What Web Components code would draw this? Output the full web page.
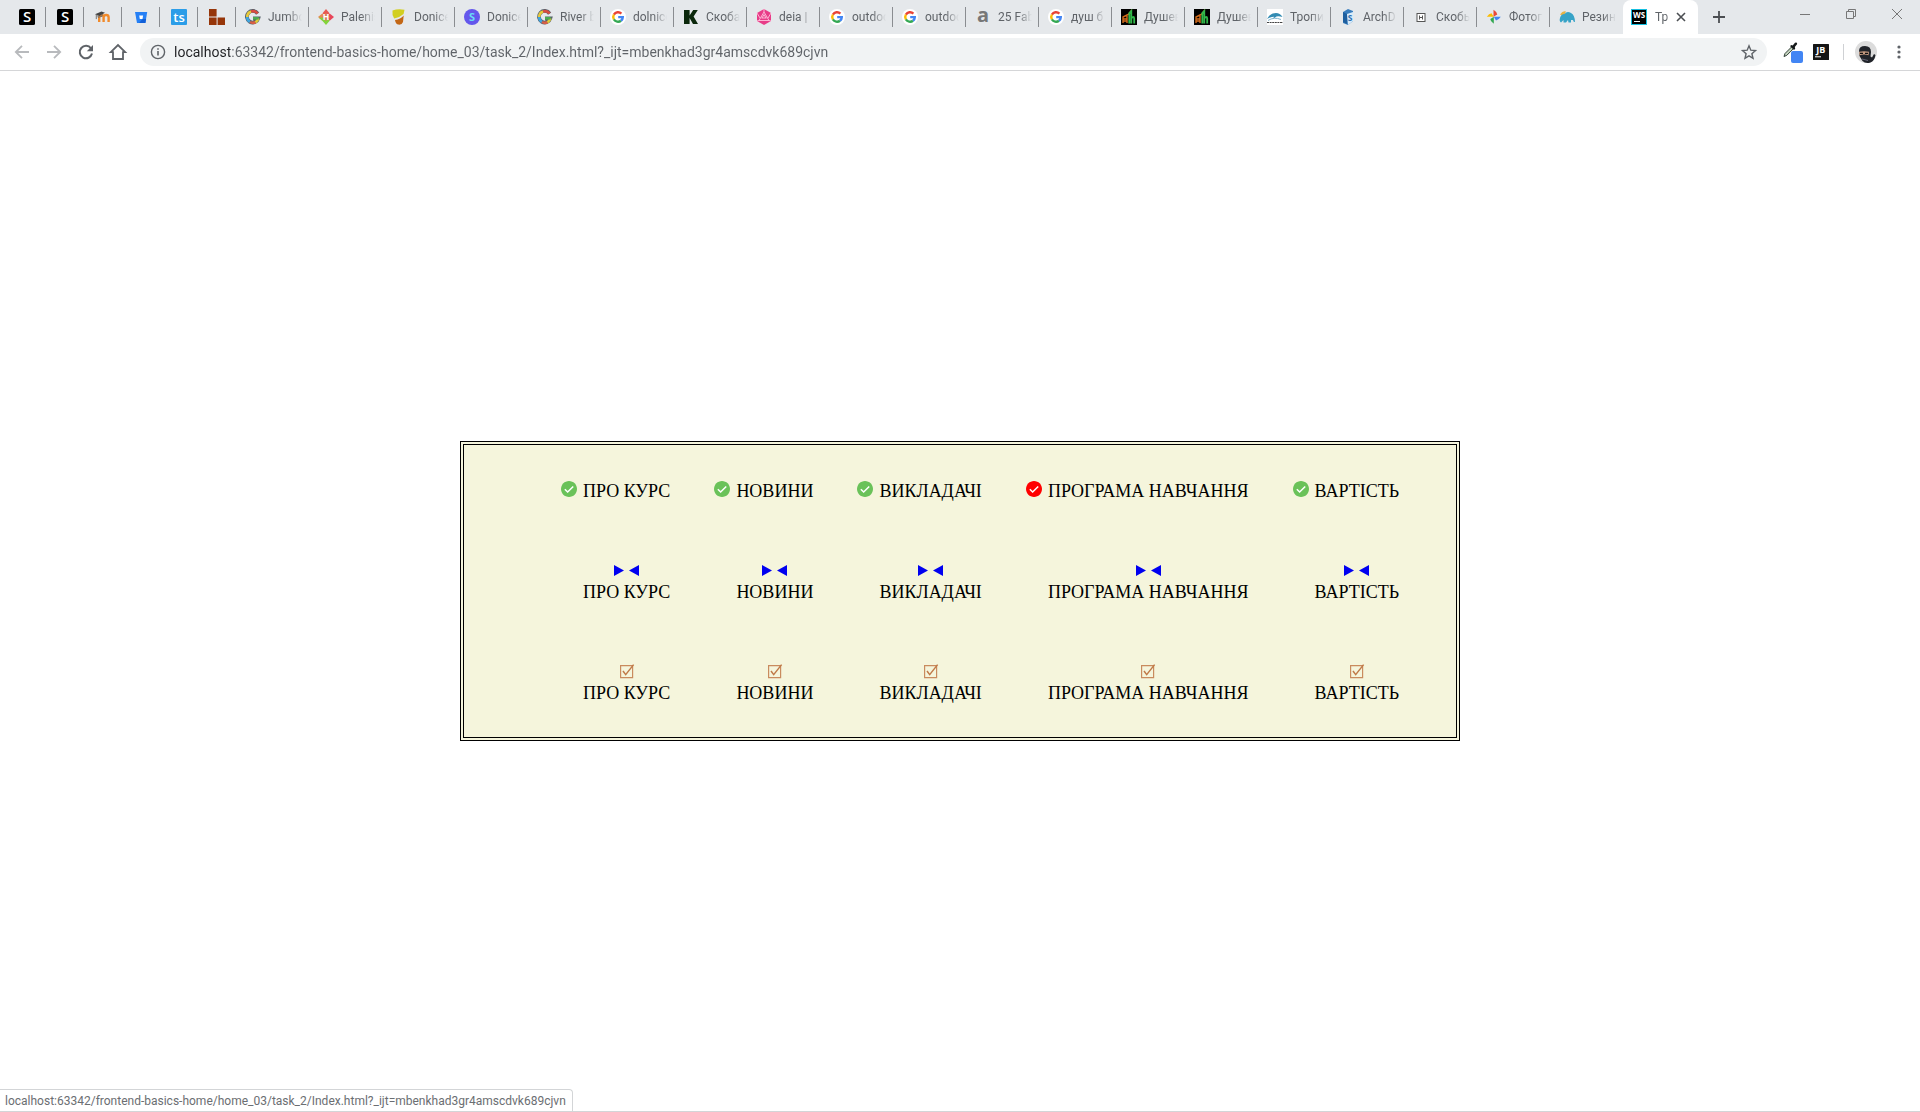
<!DOCTYPE html>
<html lang="uk">
<head>
<meta charset="utf-8">
<title>Три меню</title>
<style>
body { margin: 0; background: #fff; }
</style>
</head>
<body>
<browser-window></browser-window>
<script>
const svg = (body, box = '0 0 16 16') => `<svg viewBox="${box}" aria-hidden="true">${body}</svg>`;
const label = (t, x, y, size, fill, weight = 700) =>
  `<text x="${x}" y="${y}" font-family="Open Sans, sans-serif" font-size="${size}" font-weight="${weight}" fill="${fill}" text-anchor="middle">${t}</text>`;
const arcs = (a, b, c, d) => `<g fill="none" stroke-width="2.4">
  <path d="M3.9 5.6A4.8 4.8 0 0 1 11.4 4.6" stroke="${a}"/>
  <path d="M3.9 5.6A4.8 4.8 0 0 0 3.9 10.4" stroke="${b}"/>
  <path d="M3.9 10.4A4.8 4.8 0 0 0 11 11.7" stroke="${c}"/>
  <path d="M11 11.7A4.8 4.8 0 0 0 12.8 8.1H8.2" stroke="${d}"/></g>`;

const ICONS = {
  s: svg(`<rect width="16" height="16" rx="1.5"/>${label('S', 8, 13.4, 15, '#fff', 600)}`),
  moodle: svg(`<path d="M4.2 13V8.2q0-2.2 2.2-2.2t2.2 2.2V13M8.6 8.2q0-2.2 2.5-2.2t2.500 2.2V13" fill="none" stroke="#f18a2b" stroke-width="2.4"/><path d="M0 5.2L6.5 2.5 10 3.8 4.5 7z" fill="#444"/><path d="M1.3 5.6v4.5M3 6v2.3l4-1V5" stroke="#666" stroke-width=".9" fill="none"/>`),
  bucket: svg(`<path d="M2 3h12.2L12.4 14H4z" fill="#2680f5"/><path d="M6.2 6.4h3.9l-.6 3.7H6.8z" fill="#fff"/><path d="M9.6 10h3.5l-.7 4H6z" fill="#1260d8"/>`),
  ts: svg(`<rect width="16" height="16" rx="1" fill="#2b9de8"/>${label('ts', 8, 12.6, 13, '#fff', 600)}`),
  blocks: svg(`<path d="M0 0h7.6v7.5H0zM0 8.5h7.6V16H0zM8.6 8.5H16V16H8.6z" fill="#963509"/>`),
  gmulti: svg(`<path d="M12.600 4.600A5.800 5.800 0 1 0 13.300 9.300H8" fill="none" stroke="#55606a" stroke-width="3.800"/><g fill="none" stroke-width="2.600"><path d="M12.600 4.600A5.800 5.800 0 0 0 6 2.550" stroke="#d94b40"/><path d="M6 2.550A5.800 5.800 0 0 0 2.200 8" stroke="#e8ca3a"/><path d="M2.200 8A5.800 5.800 0 0 0 5 13" stroke="#3fa6df"/><path d="M5 13A5.800 5.800 0 0 0 10.500 13.300" stroke="#d95f45"/><path d="M10.500 13.300A5.800 5.800 0 0 0 13.300 9.300" stroke="#e0cc34"/><path d="M13.600 9.300H8" stroke="#4bab52"/></g>`),
  palen: svg(`<path d="M8 0L11.5 4.3 8 8 4.5 4.3z" fill="#e95850"/><path d="M4.3 4.5L8 8 4.3 11.7 0 8z" fill="#e88a50"/><path d="M11.7 4.500L16 8l-4.3 3.7L8 8z" fill="#e8465a"/><path d="M4.3 11.7L8 8l3.7 3.7L8 16zM.8 8.700L4.300 11.700 8 8z" fill="#83d33b"/><path d="M8 4l4 4-4 4-4-4z" fill="#d9805a"/>${label('H', 8, 11.2, 8.5, '#fff')}`),
  pot: svg(`<path d="M1.500 1.500Q7 -.5 13.500.8L12.600 5Q8 9 3.200 9.500.8 6 1.500 1.500z" fill="#d2cf21"/><path d="M4 11q5.500-.8 8.700-4.500L12 13q-1 3-4.500 2.600Q4.500 15.200 4 11z" fill="#c36716"/>`),
  scircle: svg(`<circle cx="8" cy="8" r="8" fill="#6457ec"/>${label('S', 8, 12, 11, '#69dcf4')}`),
  google: svg(`<circle cx="8" cy="8" r="8" fill="#fff"/>${arcs('#e94335', '#fbbc05', '#34a853', '#4285f4')}`),
  k: svg(`<path d="M1 1h5.6v5.4L10.2 1h4.6l-4.2 6.4L15 15h-5l-3.4-6V15H1z" fill="#0b280c"/>`),
  hex: svg(`<path d="M8 0l7 4v8l-7 4-7-4V4z" fill="#e83c88"/><path d="M8 3L3 11.5h10zM8 0v3M1 4l3 5M15 4l-3 5M3 11.5L1 12M13 11.5l2 .5M5.500 9h5M8 5.500l2 3.500M8 5.500L6 9" fill="none" stroke="#ffc1dc" stroke-width=".9"/>`),
  a: svg(label('a', 8, 13, 20, '#777')),
  gh: svg(`<rect width="16" height="16"/><path d="M2 14V8l4-2v8M2 10h4M2 12h4M7 6l3-4v3" stroke="#d16b1c" stroke-width="1.4" fill="none"/><path d="M8.3 14.5V4l2-2v12.5M10 9.5q3-3 3.2 0v5" stroke="#31b84a" stroke-width="1.8" fill="none"/>`),
  dolphin: svg(`<rect width="16" height="16" fill="#fff"/><path d="M0 10Q3 4 9 4q4 .2 6.500 4Q12 6.800 9.500 7.400L6 10l1-2.300Q3 8 0 10z" fill="#328bb3"/><path d="M1 11.500Q7 7.500 14 10.500" stroke="#7eb4ce" fill="none"/><path d="M0 13.500h16" stroke="#444" stroke-width="1.200" stroke-dasharray="2 .6"/>`),
  cube: svg(`<path d="M3 3l5-3 5 2v10l-5 4-5-2z" fill="#397dbd"/><path d="M7 5l6-2v9l-5 4z" fill="#d9ecfa"/><path d="M3 3l4 2v10l-4-2z" fill="#1e5f9f"/>${label('S', 10, 12.4, 8.5, '#2e73b2')}`),
  grid: svg(`<rect x="4" y="4.500" width="8" height="8" fill="#fff" stroke="#555"/><path d="M6.500 6.500v4M9.500 6.500v4M6.500 8.500h3" stroke="#555"/>`),
  photos: svg(`<path d="M7.500 7.800V.8Q11 3 11.300 5.500z" fill="#e94838"/><path d="M7.800 7.800h7Q12.500 11.300 10 11.500z" fill="#4285f4"/><path d="M7.800 7.800v7Q4.300 12.500 4.300 10z" fill="#35a853"/><path d="M7.800 7.800h-7Q3 4.300 5.500 4.300z" fill="#fbbc04"/>`),
  mammoth: svg(`<path d="M1 5.5Q4 1 7 2.5L5 7z" fill="#e6b448"/><path d="M1 9Q2 5 5.500 5 8 1.500 12 4q3.800 2 4 9-1.600.4-2-2l-2 0v2.500H9.500L9 11l-2 2.500H4.500V11L2 13.500Q0 12 1 9z" fill="#37a3c7"/>`),
  ws: svg(`<rect width="16" height="16" fill="#16bfe0"/><rect x="1" y="1" width="14" height="14"/>${label('WS', 8, 9, 8, '#fff')}<path d="M3 12.500h6" stroke="#fff"/>`),
  back: svg(`<path d="M15 8H2M8 1.8L1.8 8 8 14.2" fill="none" stroke="#b8babd" stroke-width="1.8"/>`),
  forward: svg(`<path d="M1 8h13M8 1.8L14.2 8 8 14.2" fill="none" stroke="#b8babd" stroke-width="1.8"/>`),
  reload: svg(`<path d="M13 4.4A6.2 6.2 0 1 0 14 9.6" fill="none" stroke="#5f6368" stroke-width="2"/><path d="M15 1v6.2H8.8z" fill="#5f6368"/>`),
  home: svg(`<path d="M0.8 8.2L8 1l7.2 7.2H13V15H3V8.2z" fill="none" stroke="#5f6368" stroke-width="1.8"/>`),
  info: svg(`<circle cx="8" cy="8" r="6.6" fill="none" stroke="#5f6368" stroke-width="1.4"/><path d="M8 7v4.5M8 4.2v1.6" stroke="#5f6368" stroke-width="1.6"/>`),
  star: svg(`<path d="M8 1.8l1.8 4.4 4.7.4-3.6 3.1 1.1 4.6L8 11.8l-4 2.5 1.1-4.6-3.6-3.1 4.7-.4z" fill="none" stroke="#5f6368" stroke-width="1.4"/>`),
  picker: svg(`<path d="M1 14.500l1-3L8.500 5l1.800 1.800-6.500 6.500z" fill="#c3d2bc" stroke="#34423a"/><path d="M7 4l1.500-1 1.200.6L12 .8q2-.8 2.200 1.200L11.800 5l.4 1.700L11 8z" fill="#15191a"/><rect x="8" y="9" width="12" height="12" rx="2" fill="#4285f4"/>`, '0 0 20 21'),
  jb: svg(`<rect width="16" height="16" rx=".5" fill="#151515"/>${label('JB', 7.8, 9, 9, '#fff')}<path d="M2 12.800h6" stroke="#fff"/>`),
  ninja: svg(`<circle cx="11" cy="11" r="11" fill="#dcdcdc"/><path d="M4 10Q4 5 10 5q6 0 6 6l-.5 4.500 1.500 1 2-3.500 1.500 1q-1 6-5 7.500-5 1.500-8-1.500L4.500 15z" fill="#202329"/><path d="M4 10.800q5-1 10 0l-.5 3.400q-4-1.200-9 0z" fill="#c59a80"/><path d="M5 12.300h3M10 12.300h3" stroke="#111" stroke-width="1.200"/><path d="M7 18l6 1.500" stroke="#667"/>`, '0 0 22 22'),
  dots: svg(`<g fill="#5f6368"><circle cx="8" cy="3" r="1.6"/><circle cx="8" cy="8" r="1.6"/><circle cx="8" cy="13" r="1.6"/></g>`),
  plus: svg(`<path d="M8 2v12M2 8h12" stroke="#4b4e52" stroke-width="1.8"/>`),
  close: svg(`<path d="M4 4l8 8M12 4l-8 8" stroke="#4b4e52" stroke-width="1.6"/>`),
  min: svg(`<path d="M3 8.500h10" stroke="#777"/>`),
  restore: svg(`<path d="M3.500 5.500h7v7h-7zM5.500 5.500v-2h7v7h-2" fill="none" stroke="#777"/>`),
  quit: svg(`<path d="M3 3l10 10M13 3L3 13" stroke="#777"/>`),
  check: svg(`<path d="M12 2C6.480 2 2 6.480 2 12s4.480 10 10 10 10-4.480 10-10S17.520 2 12 2z" fill="currentColor"/><path d="M6.800 12.300l3.500 3.500 7-7" fill="none" stroke="#fff" stroke-width="1.900"/>`, '2 2 20 20'),
  bow: svg(`<path d="M0 0l10 5.500L0 11zM25 0L15 5.500 25 11z" fill="#0000f0"/>`, '0 0 25 11'),
  tick: svg(`<path d="M.6 1.600h12v12H.6z" fill="none" stroke="#c98b5e" stroke-width="1.200"/><path d="M3 7l2.700 3.600L13.600.6" fill="none" stroke="#c07a48" stroke-width="1.500"/>`, '0 0 14 14'),
};

class BaseElement extends HTMLElement {
  connectedCallback() {
    if (this.shadowRoot) return;
    const t = document.createElement('template');
    t.innerHTML = this.render();
    this.attachShadow({ mode: 'open' }).append(t.content.cloneNode(true));
  }
}

customElements.define('ui-icon', class extends BaseElement {
  render() {
    return `<style>:host{display:block;flex:none;width:16px;height:16px}svg{display:block;width:100%;height:100%;overflow:visible}</style>${ICONS[this.getAttribute('name')]}`;
  }
});

customElements.define('icon-button', class extends BaseElement {
  render() {
    return `<style>
      :host{display:block;flex:none}
      button{display:block;border:0;padding:0;margin:0;background:none}
      ui-icon{width:var(--w,16px);height:var(--h,16px)}
      </style><button aria-label="${this.getAttribute('label')}"><ui-icon name="${this.getAttribute('name')}"></ui-icon></button>`;
  }
});

customElements.define('browser-tab', class extends BaseElement {
  render() {
    return `<style>
      :host{display:flex;align-items:center;box-sizing:border-box;flex:none;width:73px;height:34px;--fade:14px}
      :host([pinned]){width:38px}
      :host([active]){width:75px;background:#fff;border-radius:8px 8px 0 0;--fade:6px}
      :host([first]){margin-left:8px}
      button{flex:1;display:flex;align-items:center;gap:7px;min-width:0;height:20px;box-sizing:border-box;
        border:0;border-right:1px solid #8a8d91;background:none;padding:0 6px 0 9px;
        font:12px/16px Roboto,sans-serif;color:#5f6368;text-align:left}
      :host([pinned]) button{padding:0 0 0 11px}
      :host([active]) button,:host([last]) button{border-right-color:transparent}
      :host([active]) button{padding:0 0 0 8px;gap:8px}
      .t{flex:1;min-width:0;overflow:hidden;white-space:nowrap;-webkit-mask-image:linear-gradient(90deg,#000 calc(100% - var(--fade)),transparent);mask-image:linear-gradient(90deg,#000 calc(100% - var(--fade)),transparent)}
      :host([pinned]) .t{display:none}
      icon-button{margin-right:9px}
      </style>
      <button><ui-icon name="${this.getAttribute('icon')}"></ui-icon><span class="t"><slot></slot></span></button>
      ${this.hasAttribute('active') ? '<icon-button name="close" label="Закрити"></icon-button>' : ''}`;
  }
});

customElements.define('tab-strip', class extends BaseElement {
  render() {
    const pinned = ['s', 's', 'moodle', 'bucket', 'ts', 'blocks'];
    const tabs = [['gmulti','Jumbo'],['palen','Palenis'],['pot','Donice'],['scircle','Donice'],['gmulti','River b'],['google','dolnice'],['k','Скоба'],['hex','deia |'],['google','outdoo'],['google','outdoo'],['a','25 Fab'],['google','душ б'],['gh','Душев'],['gh','Душев'],['dolphin','Тропи'],['cube','ArchD'],['grid','Скобы'],['photos','Фотог'],['mammoth','Резин']];
    return `<style>
      :host{display:flex;align-items:center;height:34px;background:#e5e8eb}
      .plus{margin-left:13px}
      .win{margin-left:auto;display:flex;gap:30px;padding:0 15px 6px 0}
      </style>
      ${pinned.map((n, i) => `<browser-tab pinned icon="${n}"${i ? '' : ' first'}></browser-tab>`).join('')}
      ${tabs.map(([n, t], i) => `<browser-tab icon="${n}"${i === tabs.length - 1 ? ' last' : ''}>${t}</browser-tab>`).join('')}
      <browser-tab active icon="ws">Тр</browser-tab>
      <icon-button class="plus" name="plus" label="Нова вкладка"></icon-button>
      <div class="win"><icon-button name="min" label="Згорнути"></icon-button><icon-button name="restore" label="Відновити"></icon-button><icon-button name="quit" label="Закрити вікно"></icon-button></div>`;
  }
});

customElements.define('address-bar', class extends BaseElement {
  render() {
    return `<style>
      :host{display:flex;align-items:center;box-sizing:border-box;height:37px;background:#fff;border-bottom:1px solid #d5d6d8;padding:0 13px 0 14px}
      .nav{display:flex;gap:16px;margin-right:14px}
      .pill{flex:1;display:flex;align-items:center;height:28px;border-radius:14px;background:#f1f3f4;padding:0 10px}
      .pill ui-icon{margin-right:8px}
      input{flex:1;min-width:0;border:0;padding:0;outline:0;height:24px;font:14px/24px Roboto,sans-serif;
        color:transparent;background:linear-gradient(90deg,#202124 56px,#5f6368 56px);-webkit-background-clip:text;background-clip:text}
      .ext{display:flex;align-items:center;margin-left:16px}
      .picker{--w:20px;--h:21px;margin-right:10px}
      i{width:1px;height:16px;background:#cfd1d4;margin:0 11px 0 14px}
      .me{--w:22px;--h:22px;margin-right:14px}
      </style>
      <div class="nav"><icon-button name="back" label="Назад"></icon-button><icon-button name="forward" label="Вперед"></icon-button><icon-button name="reload" label="Оновити"></icon-button><icon-button name="home" label="Додому"></icon-button></div>
      <div class="pill"><ui-icon name="info"></ui-icon><input aria-label="Адреса" value="localhost:63342/frontend-basics-home/home_03/task_2/Index.html?_ijt=mbenkhad3gr4amscdvk689cjvn"><icon-button name="star" label="Закладка"></icon-button></div>
      <div class="ext"><icon-button class="picker" name="picker" label="Піпетка"></icon-button><icon-button name="jb" label="JetBrains"></icon-button><i></i><icon-button class="me" name="ninja" label="Профіль"></icon-button><icon-button name="dots" label="Меню"></icon-button></div>`;
  }
});

customElements.define('menu-item', class extends BaseElement {
  render() {
    const kind = this.getAttribute('kind');
    return `<style>
      :host{display:block}
      a{display:flex;flex-direction:column;align-items:center;color:#000;text-decoration:none;font:18px/22px "Liberation Serif",serif;white-space:nowrap}
      .mark{display:flex;align-items:center;justify-content:center;height:22px}
      .bow ui-icon{width:25px;height:11px}
      .tick ui-icon{width:14px;height:14px}
      .check ui-icon{color:#6ac259}
      :host([current]) .check ui-icon{color:#f00}
      a.check{flex-direction:row;align-items:flex-start;gap:6px;margin-left:-22px}
      .check .mark{height:18px}
      </style><a href="#" class="${kind}"><span class="mark"><ui-icon name="${kind}"></ui-icon></span><span><slot></slot></span></a>`;
  }
});

customElements.define('menu-row', class extends BaseElement {
  render() {
    const kind = this.getAttribute('kind');
    const names = ['ПРО КУРС', 'НОВИНИ', 'ВИКЛАДАЧІ', 'ПРОГРАМА НАВЧАННЯ', 'ВАРТІСТЬ'];
    return `<style>:host{display:block}nav{display:flex;justify-content:space-between}</style>
      <nav>${names.map((n, i) => `<menu-item kind="${kind}"${kind === 'check' && i === 3 ? ' current' : ''}>${n}</menu-item>`).join('')}</nav>`;
  }
});

customElements.define('menu-board', class extends BaseElement {
  render() {
    return `<style>
      :host{display:block;box-sizing:border-box;width:100%;max-width:1000px;border:1px solid #000;background:#f5f5dc;padding:2px}
      main{display:flex;flex-direction:column;gap:57px;border:1px solid #000;padding:35px 57px 33px 119px}
      </style><main><menu-row kind="check"></menu-row><menu-row kind="bow"></menu-row><menu-row kind="tick"></menu-row></main>`;
  }
});

customElements.define('status-bubble', class extends BaseElement {
  render() {
    return `<style>:host{position:fixed;left:0;bottom:1px;box-sizing:border-box;height:22px;padding:0 6px 0 5px;background:#fff;border:1px solid #d3d5d7;border-width:1px 1px 0 0;border-radius:0 4px 0 0;font:12px/22px Roboto,sans-serif;color:#6b6e72}</style><slot></slot>`;
  }
});

customElements.define('browser-window', class extends BaseElement {
  render() {
    return `<style>
      :host{display:flex;flex-direction:column;min-height:100vh;box-sizing:border-box;border-bottom:1px solid #d3d5d7}
      .page{flex:1;display:flex;align-items:center;justify-content:center}
      </style>
      <tab-strip></tab-strip><address-bar></address-bar>
      <div class="page"><menu-board></menu-board></div>
      <status-bubble>localhost:63342/frontend-basics-home/home_03/task_2/Index.html?_ijt=mbenkhad3gr4amscdvk689cjvn</status-bubble>`;
  }
});
</script>
</body>
</html>
